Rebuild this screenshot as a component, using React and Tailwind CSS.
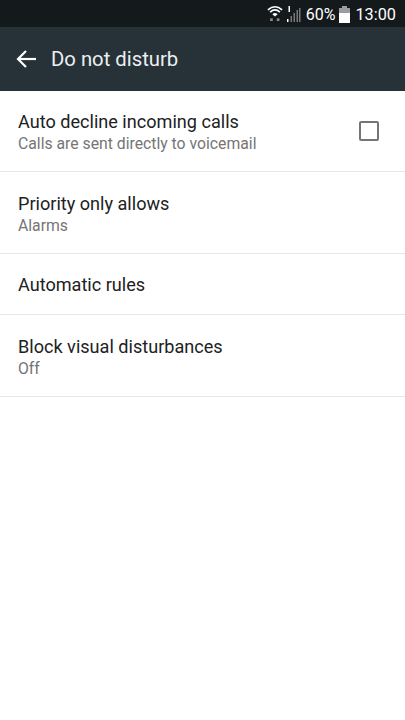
export default function App() {
  const rows = [
    { title: "Auto decline incoming calls", sub: "Calls are sent directly to voicemail", check: true, h: "h-[81px] pt-[2px]" },
    { title: "Priority only allows", sub: "Alarms", h: "h-[82px] pt-[2px]" },
    { title: "Automatic rules", h: "h-[61px] pt-[2px]" },
    { title: "Block visual disturbances", sub: "Off", h: "h-[82px] pt-[2px]" },
  ];

  return (
    <div className="w-[405px] h-[720px] bg-white font-['Roboto',sans-serif] overflow-hidden">
      {/* status bar */}
      <div className="h-[27px] bg-[#14191c] flex items-center justify-end text-white pr-[9px]">
        <svg width="16" height="18" viewBox="0 0 18 20" className="mr-[5px] -mt-[1px]">
          <path d="M1 6.5 Q9 -0.5 17 6.5" fill="none" stroke="#fff" strokeWidth="1.8" />
          <path d="M3.5 9 Q9 4 14.5 9" fill="none" stroke="#fff" strokeWidth="1.8" />
          <path d="M6 11.5 Q9 8.5 12 11.5 L9 14 Z" fill="#fff" />
          <rect x="3.5" y="16" width="3" height="3" fill="#8a8d8f" />
          <rect x="11" y="16" width="3" height="3" fill="#8a8d8f" />
        </svg>
        <svg width="14" height="18" viewBox="0 0 14 18" className="mr-[5px] -ml-[1px]">
          <rect x="0" y="14" width="1.5" height="3" fill="#fff" />
          <rect x="1.5" y="1" width="1.5" height="6" fill="#fff" />
          <rect x="3.5" y="11" width="1.5" height="6" fill="#777" />
          <rect x="6.5" y="8" width="1.5" height="9" fill="#777" />
          <rect x="9.5" y="5" width="1.5" height="12" fill="#777" />
          <rect x="12" y="3" width="1.5" height="14" fill="#777" />
        </svg>
        <span className="text-[16px] leading-none mr-[4px] mt-[3px]">60%</span>
        <svg width="11" height="17" viewBox="0 0 11 17" className="mr-[5px] mt-[1px]">
          <rect x="3" y="0" width="5" height="2" fill="#9a9c9e" />
          <rect x="0" y="2" width="11" height="5" fill="#9a9c9e" />
          <rect x="0" y="7" width="11" height="10" fill="#fff" />
        </svg>
        <span className="text-[16.3px] leading-none mt-[3px]">13:00</span>
      </div>

      {/* app bar */}
      <div className="h-[64px] bg-[#263238] flex items-center text-white">
        <svg width="20" height="18" viewBox="0 0 20 18" className="ml-[16px] mr-[15px]" fill="none" stroke="#fff" strokeWidth="2.2">
          <path d="M20 9 H2" />
          <path d="M10 1 L2 9 L10 17" />
        </svg>
        <span className="text-[20.3px] text-[#eceff1]">Do not disturb</span>
      </div>

      {/* settings list */}
      {rows.map((r) => (
        <div key={r.title} className={`${r.h} flex items-center justify-between pl-[18px] pr-[26px] border-b border-[#e6e6e6]`}>
          <div>
            <div className="text-[18.1px] leading-[24px] text-[#212121]">{r.title}</div>
            {r.sub && <div className="text-[15.75px] leading-[20px] text-[#757575]">{r.sub}</div>}
          </div>
          {r.check && <div className="w-[20px] h-[20px] border-2 border-[#757575] rounded-[2px] -mt-[3px]" />}
        </div>
      ))}
    </div>
  );
}
